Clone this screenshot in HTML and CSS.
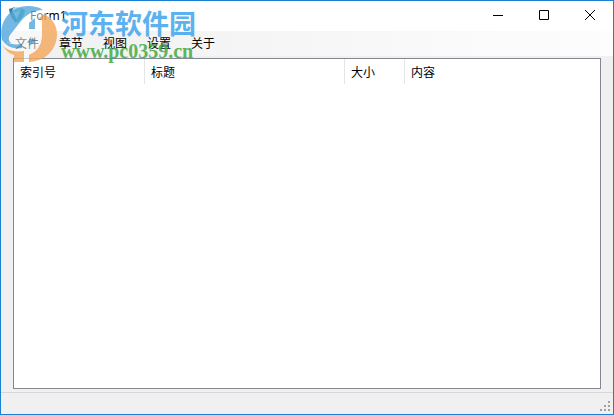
FILE: index.html
```
<!DOCTYPE html>
<html lang="zh-CN">
<head>
    <meta charset="UTF-8">
    <meta name="viewport" content="width=device-width, initial-scale=1.0">
    <title>Form1</title>
    <link rel="stylesheet" href="styles.css">
</head>
<body>
    <div class="window">
        <header class="titlebar">
            <svg class="app-icon" viewBox="0 0 16 16" aria-hidden="true">
                <path d="M0 2L6 0L4 5L8 13L7 16Q1 11 0 2Z" fill="#2f7f98"/>
                <path d="M4 1L8 0L14 2L11 5H3Z" fill="#9fd8e8"/>
                <path d="M12 1L16 3Q15 11 8 16L7 13L11 5Z" fill="#35b070"/>
            </svg>
            <h1 class="title">Form1</h1>
            <div class="controls">
                <button type="button" aria-label="最小化">
                    <svg viewBox="0 0 10 10"><path d="M0 5.5H10"/></svg>
                </button>
                <button type="button" aria-label="最大化">
                    <svg viewBox="0 0 10 10"><path d="M.5 .5H9.5V9.5H.5Z"/></svg>
                </button>
                <button type="button" aria-label="关闭">
                    <svg viewBox="0 0 10 10"><path d="M0 0L10 10M10 0L0 10"/></svg>
                </button>
            </div>
        </header>

        <nav class="menu">
            <button type="button">文件</button>
            <button type="button">章节</button>
            <button type="button">视图</button>
            <button type="button">设置</button>
            <button type="button">关于</button>
        </nav>

        <main class="content">
            <div class="list">
                <table>
                    <colgroup>
                        <col class="col-index">
                        <col class="col-title">
                        <col class="col-size">
                        <col>
                    </colgroup>
                    <thead>
                        <tr>
                            <th>索引号</th>
                            <th>标题</th>
                            <th>大小</th>
                            <th>内容</th>
                        </tr>
                    </thead>
                </table>
            </div>
        </main>

        <footer class="status">
            <svg class="grip" viewBox="0 0 10 10" aria-hidden="true">
                <path d="M8 0h2v2h-2zM4 4h2v2h-2zM8 4h2v2h-2zM0 8h2v2h-2zM4 8h2v2h-2zM8 8h2v2h-2z"/>
            </svg>
        </footer>

        <!-- 水印 -->
        <div class="watermark">
            <svg class="logo" viewBox="0 0 56 58" aria-hidden="true">
                <circle cx="28" cy="29" r="27" fill="#fff" opacity=".6"/>
                <path d="M1 35C-3 15 11 1 27 1C33 1 38 2 42 5C32 5 25 10 20 16L9 30Q6 35 10 38Q4 38 1 35Z" fill="#4ba3db" opacity=".9"/>
                <path d="M1 34Q8 41 21 39V43Q6 45 1 34ZM28 18L34 13V24H28ZM28 34H34V37L28 41Z" fill="#4ba3db" opacity=".9"/>
                <path d="M43 9C51 13 56 20 56 29C56 43 46 56 28 57V50Q40 45 41 32V16Q40 13 36 13Q41 12 43 9Z" fill="#f4a253" opacity=".9"/>
                <path d="M2 41Q9 48 23 46V57H13V50Q6 48 2 41Z" fill="#f4a253" opacity=".9"/>
            </svg>
            <div class="brand">
                <span class="brand-name">河东软件园</span>
                <span class="brand-url">www.pc0359.cn</span>
            </div>
        </div>
    </div>
</body>
</html>
```
FILE: styles.css
```
* {
    margin: 0;
    padding: 0;
    box-sizing: border-box;
}

body {
    font-family: "Noto Sans", "Noto Sans CJK SC", sans-serif;
    font-size: 12px;
    color: #000;
}

button {
    border: none;
    background: none;
    font: inherit;
    color: inherit;
}

.window {
    position: relative;
    display: flex;
    flex-direction: column;
    min-height: 100vh;
    border: 1px solid #1a80d5;
    background-color: #f0f0f0;
}

/* 标题栏 */
.titlebar {
    display: flex;
    align-items: flex-start;
    height: 30px;
    padding-left: 8px;
    background-color: #fff;
}

.app-icon {
    width: 16px;
    height: 16px;
    margin-top: 6px;
}

.title {
    flex: 1;
    margin-left: 5px;
    font-size: 12px;
    line-height: 30px;
    font-weight: normal;
}

.controls {
    display: flex;
}

.controls button {
    display: flex;
    align-items: center;
    justify-content: center;
    width: 46px;
    height: 28px;
}

.controls svg {
    width: 10px;
    height: 10px;
    fill: none;
    stroke: #000;
}

/* 菜单 */
.menu {
    display: flex;
    align-items: center;
    height: 25px;
    padding-left: 4px;
    background: linear-gradient(to right, #f0f0f0, #fdfdfd);
}

.menu button {
    width: 44px;
    line-height: 24px;
}

/* 列表 */
.content {
    display: flex;
    flex: 1;
    padding: 2px 12px 3px;
}

.list {
    flex: 1;
    border: 1px solid #828790;
    background-color: #fff;
}

table {
    width: 100%;
    table-layout: fixed;
    border-collapse: collapse;
}

.col-index {
    width: 131px;
}

.col-title {
    width: 200px;
}

.col-size {
    width: 60px;
}

th {
    height: 25px;
    padding-left: 6px;
    background: linear-gradient(#e5e5e5, #e5e5e5) right / 1px 100% no-repeat;
    font-weight: normal;
    text-align: left;
}

th:last-child {
    background: none;
}

/* 状态栏 */
.status {
    display: flex;
    align-items: flex-end;
    justify-content: flex-end;
    height: 22px;
    padding: 3px;
    border-top: 1px solid #d7d7d7;
}

.grip {
    width: 10px;
    height: 10px;
    fill: #a0a0a0;
}

.watermark {
    position: absolute;
    top: 4px;
    left: 0;
    display: flex;
    opacity: 0.85;
    pointer-events: none;
}

.logo {
    width: 56px;
    height: 58px;
}

.brand {
    display: flex;
    flex-direction: column;
    margin-left: 4px;
    padding-top: 2px;
}

.brand-name {
    font-size: 27px;
    line-height: 34px;
    font-weight: bold;
    color: #3fa5ec;
}

.brand-url {
    font-family: "Liberation Serif", serif;
    font-size: 20px;
    line-height: 20px;
    font-weight: bold;
    color: #45a943;
}
```
